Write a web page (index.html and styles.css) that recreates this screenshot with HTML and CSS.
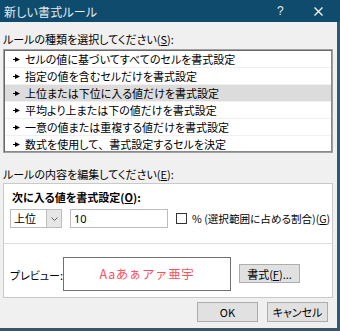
FILE: index.html
```html
<!DOCTYPE html>
<html lang="ja">
<head>
<meta charset="utf-8">
<link rel="stylesheet" href="styles.css">
</head>
<body>
<div class="window">
  <div class="titlebar">
    <span class="title">新しい書式ルール</span>
    <span class="help">?</span>
    <svg class="close" width="9" height="9" viewBox="0 0 9 9"><path d="M0.5 0.5L8.5 8.5M8.5 0.5L0.5 8.5" stroke="#ffffff" stroke-width="1.2"/></svg>
  </div>
  <div class="body">
    <div class="label">ルールの種類を選択してください(<u>S</u>):</div>
    <ul class="list">
      <li><svg class="arrow" width="7" height="5" viewBox="0 0 7 5"><path d="M0 2h3v1H0zM2 0l5 2.5L2 5z" fill="#000"/></svg>セルの値に基づいてすべてのセルを書式設定</li>
      <li><svg class="arrow" width="7" height="5" viewBox="0 0 7 5"><path d="M0 2h3v1H0zM2 0l5 2.5L2 5z" fill="#000"/></svg>指定の値を含むセルだけを書式設定</li>
      <li class="selected"><svg class="arrow" width="7" height="5" viewBox="0 0 7 5"><path d="M0 2h3v1H0zM2 0l5 2.5L2 5z" fill="#000"/></svg>上位または下位に入る値だけを書式設定</li>
      <li><svg class="arrow" width="7" height="5" viewBox="0 0 7 5"><path d="M0 2h3v1H0zM2 0l5 2.5L2 5z" fill="#000"/></svg>平均より上または下の値だけを書式設定</li>
      <li><svg class="arrow" width="7" height="5" viewBox="0 0 7 5"><path d="M0 2h3v1H0zM2 0l5 2.5L2 5z" fill="#000"/></svg>一意の値または重複する値だけを書式設定</li>
      <li><svg class="arrow" width="7" height="5" viewBox="0 0 7 5"><path d="M0 2h3v1H0zM2 0l5 2.5L2 5z" fill="#000"/></svg>数式を使用して<span class="full">、</span>書式設定するセルを決定</li>
    </ul>
    <div class="label label2">ルールの内容を編集してください(<u>E</u>):</div>
    <div class="panel">
      <div class="section-top">
        <div class="heading">次に入る値を書式設定(<u>O</u>):</div>
        <div class="controls">
          <div class="combo">
            <span class="combo-text">上位</span>
            <span class="combo-btn"><svg width="7" height="4" viewBox="0 0 7 4"><path d="M0.5 0.5L3.5 3.5L6.5 0.5" stroke="#606060" fill="none" stroke-width="1"/></svg></span>
          </div>
          <div class="input">10</div>
          <span class="checkbox"></span>
          <span class="check-label">% (選択範囲に占める割合)(<u>G</u>)</span>
        </div>
      </div>
      <div class="section-bottom">
        <span class="preview-label">プレビュー:</span>
        <div class="preview">Aaあぁアァ亜宇</div>
        <div class="btn format-btn">書式(<u>F</u>)...</div>
      </div>
    </div>
    <div class="buttons">
      <div class="btn dlg-btn">OK</div>
      <div class="btn dlg-btn">キャンセル</div>
    </div>
  </div>
</div>
</body>
</html>
```

FILE: styles.css
```css
* { box-sizing: border-box; }
html, body {
  margin: 0;
  padding: 0;
  width: 340px;
  height: 331px;
  overflow: hidden;
  background: #f0f0f0;
}
body {
  font-family: "Noto Sans CJK JP", "Noto Sans", sans-serif;
  font-feature-settings: "palt";
  font-size: 11px;
  color: #000;
}
.window {
  width: 340px;
  height: 331px;
  display: flex;
  flex-direction: column;
  border-right: 3px solid #2b5b78;
  border-bottom: 3px solid #3c5566;
  background: #f0f0f0;
}
.titlebar {
  height: 22px;
  flex: none;
  background: #0e4b6c;
  display: flex;
  align-items: center;
  padding-left: 4px;
  color: #e6edf2;
  margin-right: -3px;
}
.title {
  font-size: 12px;
  flex: 1;
  letter-spacing: 0.2px;
}
.help {
  font-family: "Liberation Sans", sans-serif;
  font-size: 12px;
  width: 6px;
  margin-right: 31px;
}
.close {
  margin-right: 17px;
}
.body {
  flex: 1;
  display: flex;
  flex-direction: column;
  padding: 0 4px 0 3px;
}
.label {
  height: 16px;
  line-height: 16px;
  margin-top: 9px;
  white-space: nowrap;
}
.label2 {
  margin-top: 13px;
}
u { text-decoration: underline; text-underline-offset: 1px; }
.full { font-feature-settings: normal; }
.list {
  list-style: none;
  margin: 2px 0 0 0;
  padding: 0;
  height: 104px;
  background: #ffffff;
  border: 1px solid #a0a0a0;
  box-shadow: inset 1px 1px 0 #696969, inset -1px -1px 0 #8a8a8a;
  padding: 1px;
  display: flex;
  flex-direction: column;
}
.list li {
  flex: 1;
  display: flex;
  align-items: center;
  padding-left: 8px;
  border-bottom: 1px solid #f0f0f0;
  white-space: nowrap;
}
.list li:last-child { border-bottom: none; }
.list li.selected { background: #dcdcdc; }
.arrow {
  margin-right: 5px;
  flex: none;
}
.panel {
  margin-top: 1px;
  height: 115px;
  background: #ffffff;
  border: 1px solid #c9c9c9;
  display: flex;
  flex-direction: column;
}
.section-top {
  height: 60px;
  border-bottom: 1px solid #dedede;
  padding: 5px 0 0 8px;
  flex: none;
}
.heading {
  font-weight: bold;
  height: 16px;
  line-height: 16px;
}
.controls {
  display: flex;
  align-items: center;
  margin-top: 4px;
  margin-left: -2px;
  height: 19px;
}
.combo {
  width: 52px;
  height: 19px;
  border: 1px solid #bdbdbd;
  display: flex;
  align-items: stretch;
}
.combo-text {
  flex: 1;
  padding-left: 3px;
  line-height: 17px;
}
.combo-btn {
  width: 15px;
  background: #e6e6e6;
  border-left: 1px solid #bdbdbd;
  display: flex;
  align-items: center;
  justify-content: center;
}
.input {
  margin-left: 8px;
  width: 98px;
  height: 19px;
  border: 1px solid #bdbdbd;
  padding-left: 3px;
  line-height: 17px;
  font-family: "Noto Sans", sans-serif;
}
.checkbox {
  margin-left: 8px;
  width: 11px;
  height: 11px;
  border: 1px solid #333333;
  background: #fff;
  flex: none;
}
.check-label {
  margin-left: 5px;
  white-space: nowrap;
  font-size: 10.6px;
}
.section-bottom {
  flex: 1;
  display: flex;
  align-items: center;
  padding: 6px 0 0 6px;
}
.preview-label {
  width: 53px;
  flex: none;
  white-space: nowrap;
  padding-top: 2px;
}
.preview {
  width: 168px;
  height: 34px;
  flex: none;
  border: 1px solid #707070;
  display: flex;
  align-items: center;
  justify-content: center;
  color: #ff4f5e;
  font-size: 12.5px;
  letter-spacing: 0.6px;
  font-feature-settings: normal;
}
.btn {
  background: #e1e1e1;
  border: 1px solid #adadad;
  display: flex;
  align-items: center;
  justify-content: center;
  white-space: nowrap;
}
.format-btn {
  margin-left: 8px;
  width: 61px;
  height: 19px;
  flex: none;
}
.buttons {
  display: flex;
  justify-content: flex-end;
  gap: 9px;
  margin-top: 4px;
  padding-right: 5px;
}
.dlg-btn {
  width: 61px;
  height: 20px;
}
```
